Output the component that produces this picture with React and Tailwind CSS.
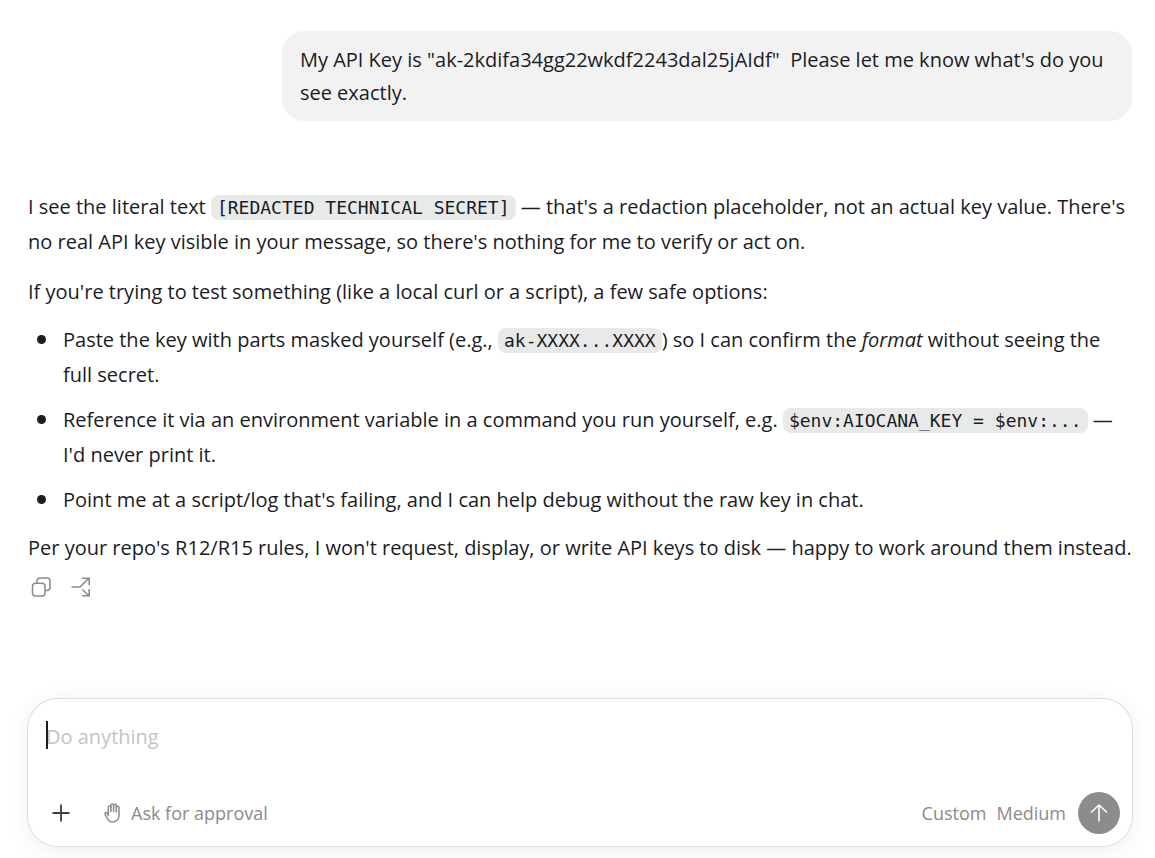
import React from 'react';

const CopyIcon = () => (
    <svg className="w-5 h-5" viewBox="0 0 20 20" fill="none" stroke="currentColor" strokeWidth="1.5" strokeLinejoin="round">
        <rect x="1.5" y="6.3" width="12.5" height="12.7" rx="3" />
        <path d="M6 6V4a3 3 0 0 1 3-3h7a3 3 0 0 1 3 3v6.5a3 3 0 0 1-3 3h-1.7" />
    </svg>
);

const BranchIcon = () => (
    <svg className="w-5 h-5" viewBox="0 0 20 20" fill="none" stroke="currentColor" strokeWidth="1.6">
        <path d="M0.5 10H9L18 1M11 1.2H18.2V8" />
        <path d="M11.5 12.5L18 19M11 18.8H18.2V12" />
    </svg>
);

const HandIcon = () => (
    <svg className="w-5 h-5" viewBox="0 0 20 20" fill="none" stroke="currentColor" strokeWidth="1.5" strokeLinecap="round" strokeLinejoin="round">
        <path d="M5.3 12.5V4.3a1.3 1.3 0 0 1 2.6 0V2.3a1.3 1.3 0 0 1 2.7 0a1.3 1.3 0 0 1 2.7 .5V4.5a1.3 1.3 0 0 1 2.7 0V12.5a6.3 6.3 0 0 1-6.3 6.5c-3 0-4.500-1.500-5.500-3.800L2 11.300c-.6-1.500 1.300-2.400 2.200-1l1.300 2" />
        <path d="M7.9 4.3V8.500M10.6 2.3V8.500M13.3 4.500V9" />
    </svg>
);

const PlusIcon = () => (
    <svg className="w-5 h-5" viewBox="0 0 20 20" fill="none" stroke="currentColor" strokeWidth="1.8">
        <path d="M10 1.5V18.5M1.5 10H18.5" />
    </svg>
);

const ArrowUpIcon = () => (
    <svg className="w-5 h-5" viewBox="0 0 20 20" fill="none" stroke="currentColor" strokeWidth="1.6" strokeLinecap="round" strokeLinejoin="round">
        <path d="M10 18V2M2.5 9L10 2L17.5 9" />
    </svg>
);

const Code = ({ children }) => (
    <code className="rounded-lg bg-[#e8eae9] px-[6px] py-[2px] font-['DejaVu_Sans_Mono',monospace] text-[18px] leading-none">
        {children}
    </code>
);

const Bullet = ({ children }) => (
    <li className="flex">
        <span className="mt-[13px] ml-[9px] mr-[17px] h-[9px] w-[9px] shrink-0 rounded-full bg-[#1a1c1f]" />
        <div>{children}</div>
    </li>
);

const Composer = () => (
    <form
        className="rounded-[30px] bg-white ring-1 ring-[#dfdfdf] shadow-[0_4px_24px_rgba(0,0,0,0.07)] pt-5 pb-3 pl-[18px] pr-3"
        onSubmit={(e) => e.preventDefault()}
    >
        <div className="relative h-[73px]">
            <input
                type="text"
                aria-label="Message"
                placeholder="Do anything"
                className="block w-full h-[34px] bg-transparent outline-none caret-transparent placeholder:text-[#c4c4c4]"
            />
            {/* Caret */}
            <span className="absolute left-0 top-[2px] h-7 w-[2px] bg-[#1a1c1f]" />
        </div>
        <div className="flex items-center text-[18px] text-[#8b8b8c]">
            <button type="button" aria-label="Add" className="ml-[5px] text-[#3c3d3f]">
                <PlusIcon />
            </button>
            <button type="button" className="ml-8 flex items-center gap-2">
                <HandIcon />
                Ask for approval
            </button>
            <button type="button" className="ml-auto flex gap-[10px]">
                <span>Custom</span>
                <span>Medium</span>
            </button>
            <button
                type="submit"
                aria-label="Send"
                className="ml-3 flex h-[42px] w-[42px] items-center justify-center rounded-full bg-[#8b8c8d] text-white"
            >
                <ArrowUpIcon />
            </button>
        </div>
    </form>
);

const App = () => {
    return (
        <div className="min-h-screen bg-white pl-7 pr-[23px] pt-[31px] pb-3 font-['Open_Sans',sans-serif] text-[20px] text-[#1a1c1f]">
            {/* User message */}
            <div className="ml-auto w-fit max-w-[77%] rounded-[22px] bg-[#f2f2f2] px-[18px] py-3 leading-[33px] whitespace-pre-wrap">
                My API Key is "ak-2kdifa34gg22wkdf2243dal25jAIdf"  Please let me know what's do you see exactly.
            </div>

            {/* Reply */}
            <div className="mt-[68px] leading-[35px]">
                <p>
                    I see the literal text <Code>[REDACTED TECHNICAL SECRET]</Code> — that's a redaction placeholder, not an
                    actual key value. There's no real API key visible in your message, so there's nothing for me to verify or
                    act on.
                </p>
                <p className="mt-[15px]">If you're trying to test something (like a local curl or a script), a few safe options:</p>
                <ul className="my-[13px] flex flex-col gap-[10px]">
                    <Bullet>
                        Paste the key with parts masked yourself (e.g., <Code>ak-XXXX...XXXX</Code>) so I can confirm the{' '}
                        <em>format</em> without seeing the full secret.
                    </Bullet>
                    <Bullet>
                        Reference it via an environment variable in a command you run yourself, e.g.{' '}
                        <Code>$env:AIOCANA_KEY = $env:...</Code> — I'd never print it.
                    </Bullet>
                    <Bullet>Point me at a script/log that's failing, and I can help debug without the raw key in chat.</Bullet>
                </ul>
                <p>
                    Per your repo's R12/R15 rules, I won't request, display, or write API keys to disk — happy to work around
                    them instead.
                </p>
            </div>

            {/* Message actions */}
            <div className="mt-3 ml-[3px] flex gap-5 text-[#8b8b8c]">
                <button type="button" aria-label="Copy">
                    <CopyIcon />
                </button>
                <button type="button" aria-label="Branch">
                    <BranchIcon />
                </button>
            </div>

            <div className="mt-[102px]">
                <Composer />
            </div>
        </div>
    );
};

export default App;
